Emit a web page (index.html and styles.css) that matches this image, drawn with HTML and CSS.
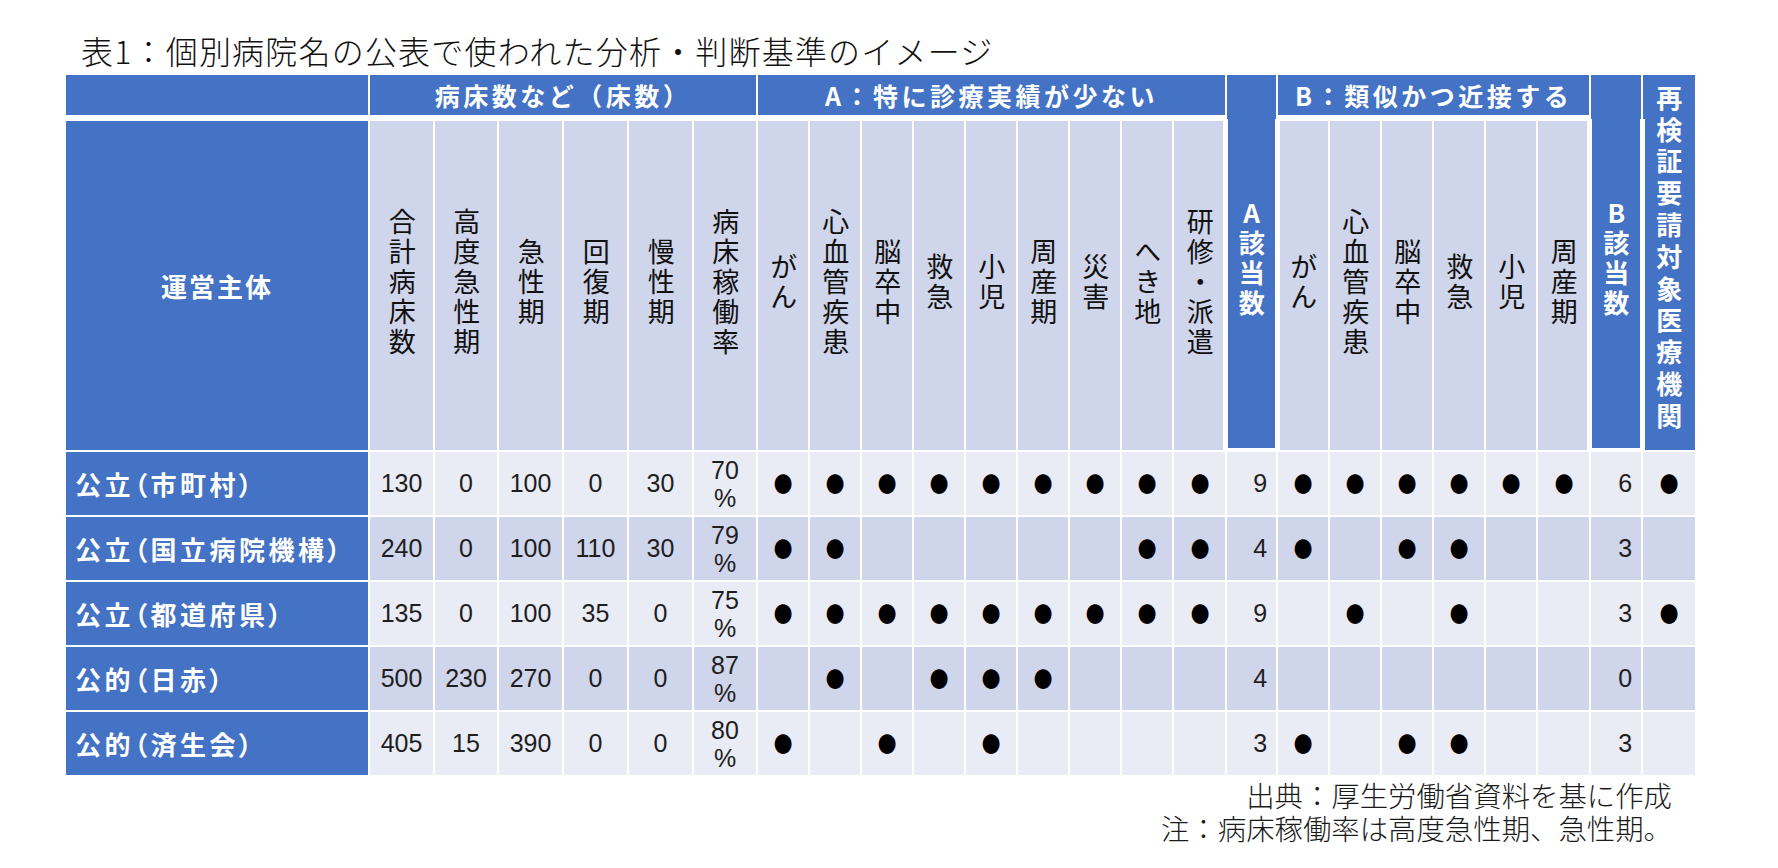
FILE: index.html
```html
<!DOCTYPE html>
<html lang="ja">
<head>
<meta charset="utf-8">
<title>表1：個別病院名の公表で使われた分析・判断基準のイメージ</title>
<link rel="stylesheet" href="styles.css">
</head>
<body>
<div class="page">
  <h1 class="title">表1：個別病院名の公表で使われた分析・判断基準のイメージ</h1>
  <table class="criteria">
    <colgroup>
      <col class="w-owner">
      <col class="w63"><col class="w62"><col class="w63"><col class="w63"><col class="w63"><col class="w62">
      <col class="w50"><col class="w50"><col class="w50"><col class="w50"><col class="w50"><col class="w50"><col class="w50"><col class="w50"><col class="w51">
      <col class="w49">
      <col class="w50"><col class="w50"><col class="w50"><col class="w50"><col class="w50"><col class="w51">
      <col class="w50">
      <col class="w52">
    </colgroup>
    <thead>
      <tr class="group-row">
        <th class="dark corner"></th>
        <th class="dark group" colspan="6">病床数など（床数）</th>
        <th class="dark group" colspan="9">A：特に診療実績が少ない</th>
        <th class="dark count" rowspan="2"><span class="vt vt-count">A該当数</span></th>
        <th class="dark group" colspan="6">B：類似かつ近接する</th>
        <th class="dark count" rowspan="2"><span class="vt vt-count">B該当数</span></th>
        <th class="dark final" rowspan="2"><span class="vt vt-final">再検証要請対象医療機関</span></th>
      </tr>
      <tr class="sub-row">
        <th class="dark owner-head">運営主体</th>
        <th class="sub"><span class="vt">合計病床数</span></th>
        <th class="sub"><span class="vt">高度急性期</span></th>
        <th class="sub"><span class="vt">急性期</span></th>
        <th class="sub"><span class="vt">回復期</span></th>
        <th class="sub"><span class="vt">慢性期</span></th>
        <th class="sub"><span class="vt">病床稼働率</span></th>
        <th class="sub"><span class="vt">がん</span></th>
        <th class="sub"><span class="vt">心血管疾患</span></th>
        <th class="sub"><span class="vt">脳卒中</span></th>
        <th class="sub"><span class="vt">救急</span></th>
        <th class="sub"><span class="vt">小児</span></th>
        <th class="sub"><span class="vt">周産期</span></th>
        <th class="sub"><span class="vt">災害</span></th>
        <th class="sub"><span class="vt">へき地</span></th>
        <th class="sub"><span class="vt">研修・派遣</span></th>
        <th class="sub"><span class="vt">がん</span></th>
        <th class="sub"><span class="vt">心血管疾患</span></th>
        <th class="sub"><span class="vt">脳卒中</span></th>
        <th class="sub"><span class="vt">救急</span></th>
        <th class="sub"><span class="vt">小児</span></th>
        <th class="sub"><span class="vt">周産期</span></th>
      </tr>
    </thead>
    <tbody>
      <tr>
        <th class="dark owner">公立（市町村）</th>
        <td>130</td><td>0</td><td>100</td><td>0</td><td>30</td><td class="rate">70<br>%</td>
        <td><span class="dot">●</span></td><td><span class="dot">●</span></td><td><span class="dot">●</span></td><td><span class="dot">●</span></td><td><span class="dot">●</span></td><td><span class="dot">●</span></td><td><span class="dot">●</span></td><td><span class="dot">●</span></td><td><span class="dot">●</span></td>
        <td class="num">9</td>
        <td><span class="dot">●</span></td><td><span class="dot">●</span></td><td><span class="dot">●</span></td><td><span class="dot">●</span></td><td><span class="dot">●</span></td><td><span class="dot">●</span></td>
        <td class="num">6</td>
        <td><span class="dot">●</span></td>
      </tr>
      <tr>
        <th class="dark owner">公立（国立病院機構）</th>
        <td>240</td><td>0</td><td>100</td><td>110</td><td>30</td><td class="rate">79<br>%</td>
        <td><span class="dot">●</span></td><td><span class="dot">●</span></td><td></td><td></td><td></td><td></td><td></td><td><span class="dot">●</span></td><td><span class="dot">●</span></td>
        <td class="num">4</td>
        <td><span class="dot">●</span></td><td></td><td><span class="dot">●</span></td><td><span class="dot">●</span></td><td></td><td></td>
        <td class="num">3</td>
        <td></td>
      </tr>
      <tr>
        <th class="dark owner">公立（都道府県）</th>
        <td>135</td><td>0</td><td>100</td><td>35</td><td>0</td><td class="rate">75<br>%</td>
        <td><span class="dot">●</span></td><td><span class="dot">●</span></td><td><span class="dot">●</span></td><td><span class="dot">●</span></td><td><span class="dot">●</span></td><td><span class="dot">●</span></td><td><span class="dot">●</span></td><td><span class="dot">●</span></td><td><span class="dot">●</span></td>
        <td class="num">9</td>
        <td></td><td><span class="dot">●</span></td><td></td><td><span class="dot">●</span></td><td></td><td></td>
        <td class="num">3</td>
        <td><span class="dot">●</span></td>
      </tr>
      <tr>
        <th class="dark owner">公的（日赤）</th>
        <td>500</td><td>230</td><td>270</td><td>0</td><td>0</td><td class="rate">87<br>%</td>
        <td></td><td><span class="dot">●</span></td><td></td><td><span class="dot">●</span></td><td><span class="dot">●</span></td><td><span class="dot">●</span></td><td></td><td></td><td></td>
        <td class="num">4</td>
        <td></td><td></td><td></td><td></td><td></td><td></td>
        <td class="num">0</td>
        <td></td>
      </tr>
      <tr>
        <th class="dark owner">公的（済生会）</th>
        <td>405</td><td>15</td><td>390</td><td>0</td><td>0</td><td class="rate">80<br>%</td>
        <td><span class="dot">●</span></td><td></td><td><span class="dot">●</span></td><td></td><td><span class="dot">●</span></td><td></td><td></td><td></td><td></td>
        <td class="num">3</td>
        <td><span class="dot">●</span></td><td></td><td><span class="dot">●</span></td><td><span class="dot">●</span></td><td></td><td></td>
        <td class="num">3</td>
        <td></td>
      </tr>
    </tbody>
  </table>
  <div class="notes">
    <p>出典：厚生労働省資料を基に作成</p>
    <p>注：病床稼働率は高度急性期、急性期。</p>
  </div>
</div>
</body>
</html>
```

FILE: styles.css
```css
body {
  margin: 0;
  background: #ffffff;
  color: #000000;
  font-family: "Noto Sans CJK JP", "Noto Sans", sans-serif;
}

.page {
  width: 1633px;
  padding: 30px 0 0 64px;
}

.title {
  margin: 0 0 0 17px;
  font-size: 32px;
  font-weight: 300;
  letter-spacing: 1.2px;
  line-height: 40px;
  color: #111111;
}

.criteria {
  margin-top: 3px;
  width: 1633px;
  table-layout: fixed;
  border-collapse: separate;
  border-spacing: 2px;
}

.w-owner { width: 302px; }
.w63 { width: 63px; }
.w62 { width: 62px; }
.w52 { width: 52px; }
.w51 { width: 51px; }
.w50 { width: 50px; }
.w49 { width: 49px; }

.criteria th,
.criteria td {
  padding: 0;
  text-align: center;
  vertical-align: middle;
}

.dark {
  background: #4472c4;
  color: #ffffff;
  font-weight: 700;
}

.group-row {
  height: 44px;
}

.group-row .group,
.group-row .corner {
  border-bottom: 4px solid #ffffff;
}

.group {
  font-size: 25px;
  letter-spacing: 3.5px;
  line-height: 40px;
  white-space: nowrap;
}

/* the count columns carry a heavier white frame in the sub-header band */
.count {
  position: relative;
}

.count::after {
  content: "";
  position: absolute;
  top: 44px;
  bottom: -2px;
  left: -4px;
  right: -4px;
  border-style: solid;
  border-color: #ffffff;
  border-width: 0 5px 4px 5px;
  pointer-events: none;
}

.sub-row {
  height: 329px;
}

.sub {
  background: #cfd5ea;
  color: #111111;
  font-weight: 400;
}

.owner-head {
  font-size: 26px;
  letter-spacing: 2px;
}

.vt {
  display: inline-block;
  writing-mode: vertical-rl;
  text-orientation: upright;
  font-size: 27px;
  line-height: 1.2;
  letter-spacing: 3px;
}

.vt-count {
  font-size: 26px;
  font-weight: 700;
  letter-spacing: 4px;
}

.vt-final {
  font-size: 26px;
  font-weight: 700;
  letter-spacing: 5.8px;
}

tbody tr {
  height: 63px;
}

tbody td {
  font-family: "Liberation Sans", "Noto Sans CJK JP", sans-serif;
  font-size: 25px;
  color: #1e1e1e;
  white-space: nowrap;
}

tbody tr:nth-child(odd) td {
  background: #e9ebf5;
}

tbody tr:nth-child(even) td {
  background: #cfd5ea;
}

.criteria .owner {
  padding-left: 9px;
  text-align: left;
  font-size: 26px;
  letter-spacing: 3.5px;
  font-feature-settings: "palt";
  white-space: nowrap;
}

.criteria td.num {
  text-align: right;
  padding-right: 9px;
}

.rate {
  line-height: 28px;
}

.dot {
  display: inline-block;
  font-family: "Noto Sans CJK JP", sans-serif;
  font-size: 22px;
  line-height: 1;
  color: #000000;
  transform: scaleX(0.85);
}

.notes {
  margin-top: 1px;
  padding-right: 25px;
  text-align: right;
  font-size: 28.4px;
  font-weight: 300;
  line-height: 33px;
  color: #1a1a1a;
}

.notes p {
  margin: 0;
}
```
